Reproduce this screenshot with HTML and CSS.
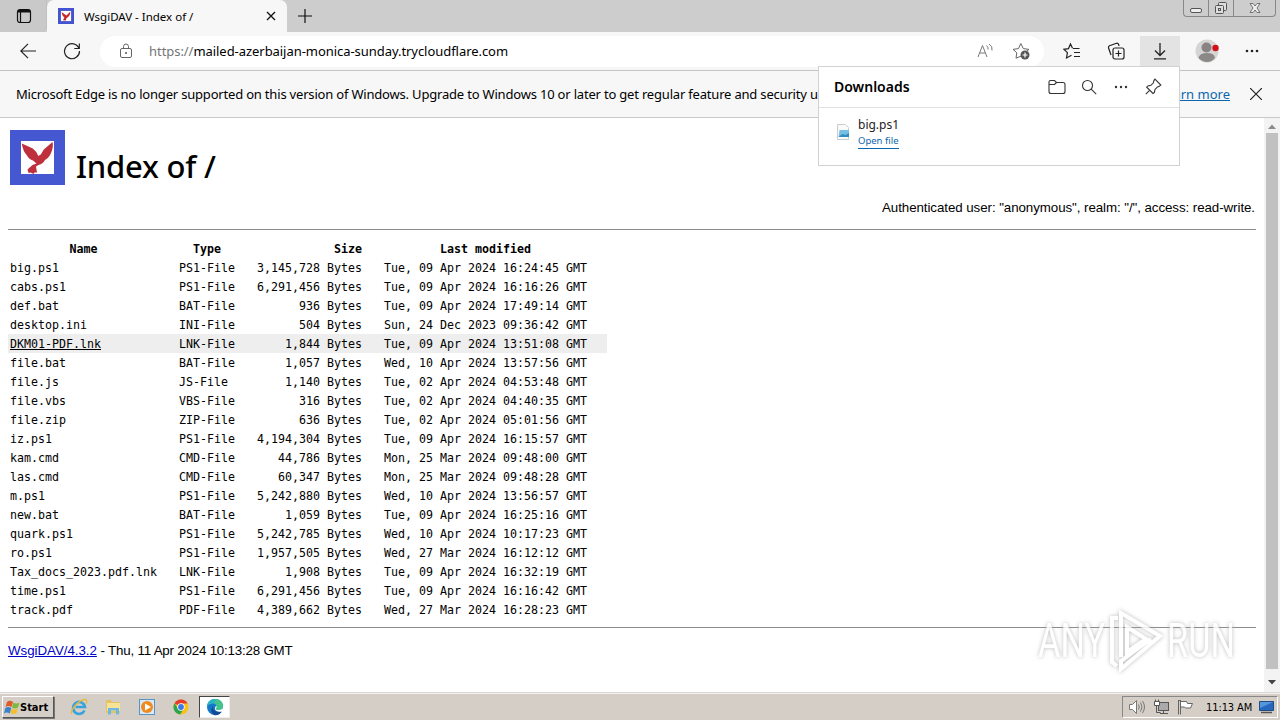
FILE: index.html
```html
<!DOCTYPE html>
<html lang="en">
<head>
  <meta charset="UTF-8" />
  <title>WsgiDAV - Index of /</title>
  <link rel="stylesheet" href="styles.css">
</head>
<body>
  <div class="tabbar">
    <div class="tab-actions">
      <svg width="16" height="16" viewBox="0 0 16 16" fill="none" stroke="#111" stroke-width="1.2"><rect x="1.5" y="1.5" width="13" height="13" rx="2.5"/><path d="M2 3.2h12" stroke-width="2.6"/><path d="M4.500 4v10"/></svg>
    </div>
    <div class="tab">
      <svg class="favicon" width="16" height="16" viewBox="0 0 55 55"><rect width="55" height="55" fill="#4454d0"/><rect x="10" y="10" width="35" height="35" fill="#fff"/><path d="M12 14l17 12 13-13c1 10-4 18-13 22l-2 8-10-1 5-9-6-6z" fill="#c62828"/></svg>
      <span class="tab-title">WsgiDAV - Index of /</span>
      <svg width="10" height="10" viewBox="0 0 10 10" stroke="#111" stroke-width="1.3"><path d="M1 1l8 8M9 1l-8 8"/></svg>
    </div>
    <div class="new-tab">
      <svg width="14" height="14" viewBox="0 0 14 14" stroke="#111" stroke-width="1.2"><path d="M7 0v14M0 7h14"/></svg>
    </div>
    <div class="window-buttons">
      <span class="wb wb-min"><svg width="14" height="16" viewBox="0 0 14 16" fill="#eee" stroke="#555"><rect x="1.5" y="8.5" width="11" height="4" rx="1.5"/></svg></span>
      <span class="wb wb-max"><svg width="14" height="16" viewBox="0 0 14 16" fill="#ddd" stroke="#555"><rect x="4.5" y="2.500" width="8" height="8" rx="1"/><rect x="1.500" y="5.500" width="8" height="8" rx="1"/><rect x="4.500" y="8.500" width="2" height="2"/></svg></span>
      <span class="wb wb-close"><svg width="12" height="16" viewBox="0 0 12 16" fill="#eee" stroke="#666" stroke-width=".9"><path d="M1 3.500h3l2 2.500 2-2.500h3L8 8l3 4.500H8L6 10l-2 2.500H1L4 8z"/></svg></span>
    </div>
  </div>

  <div class="toolbar">
    <svg class="back" width="16" height="16" viewBox="0 0 16 16" fill="none" stroke="#222" stroke-width="1.2"><path d="M16 8H.8M8 .8L.8 8 8 15.200"/></svg>
    <svg class="reload" width="18" height="18" viewBox="0 0 18 18" fill="none" stroke="#222" stroke-width="1.200"><path d="M16 6.500A7.500 7.500 0 1 0 16.500 9M16.300 1.500v5h-5"/></svg>
    <div class="address">
      <svg class="lock" width="14" height="16" viewBox="0 0 14 16" fill="none" stroke="#666"><rect x="1.500" y="5.500" width="11" height="9" rx="1.500"/><path d="M4.500 5.500V3.500a2.500 2.500 0 0 1 5 0v2"/><circle cx="7" cy="10" r=".7" fill="#666"/></svg>
      <span class="url"><span class="scheme">https://</span>mailed-azerbaijan-monica-sunday.trycloudflare.com</span>
      <svg class="read" width="17" height="16" viewBox="0 0 17 16" fill="none" stroke="#777"><path d="M1 14L5.500 2.500 10 14M3 10h5M9.500 2.500q2 1.500 1.500 4M12 1q4 2.500 3 6.500"/></svg>
      <svg class="fav" width="18" height="18" viewBox="0 0 18 18" fill="none" stroke="#666"><path d="M9 14.200l-5 2 .8-5.500L1 7.400l5.500-.8L8.800 1.500l2.500 5.100 5.700.8-3 2.500"/><circle cx="13" cy="13" r="4.500" fill="#555" stroke="none"/><path d="M13 10.500v5M10.500 13h5" stroke="#fff" stroke-width="1.200"/></svg>
    </div>
    <div class="tool"><svg width="18" height="18" viewBox="0 0 18 18" fill="none" stroke="#222" stroke-width="1.200"><path d="M10 6.500h6.500M11 10.500h6M11 14.500h6M9.500 6.200L7.500 2 5.500 6.600 1 7.300l3.400 3.400-.9 5.300 5-2.700"/></svg></div>
    <div class="tool"><svg width="18" height="18" viewBox="0 0 18 18" fill="none" stroke="#222" stroke-width="1.200"><rect x="6" y="6" width="11" height="11" rx="2"/><path d="M11.500 8.500v6M8.500 11.500h6M4 13L1.500 5.800q-.3-1.400 1-2L9.500 1.300q1.500-.4 2 1l.6 1.700"/></svg></div>
    <div class="tool active"><svg width="16" height="18" viewBox="0 0 16 18" fill="none" stroke="#222" stroke-width="1.300"><path d="M8 1v12M3 8.500L8 13.500l5-5M2 16.800h12"/></svg></div>
    <div class="tool profile"><svg width="24" height="24" viewBox="0 0 24 24"><circle cx="12" cy="12" r="11.500" fill="#d5d5d3"/><circle cx="11.500" cy="8.500" r="5" fill="#898383"/><path d="M3.500 19q1-5 8.500-5t8 5q-3.500 4-8 4t-8.500-4z" fill="#8b8987"/><circle cx="20.500" cy="9" r="3.200" fill="#d2101c"/></svg></div>
    <div class="tool"><svg width="14" height="4" viewBox="0 0 14 4" fill="#222"><circle cx="2" cy="2" r="1.300"/><circle cx="7" cy="2" r="1.300"/><circle cx="12" cy="2" r="1.300"/></svg></div>
  </div>

  <div class="notice">
    <span class="notice-text">Microsoft Edge is no longer supported on this version of Windows. Upgrade to Windows 10 or later to get regular feature and security u</span>
    <a class="learn" href="#">Learn more</a>
    <svg width="12" height="12" viewBox="0 0 12 12" stroke="#222" stroke-width="1.200"><path d="M0 0l12 12M12 0L0 12"/></svg>
  </div>

  <div class="view">
    <div class="page">
      <h1>
        <svg width="55" height="55" viewBox="0 0 55 55"><rect width="55" height="55" fill="#4558d2"/><rect x="11" y="11" width="33" height="33" fill="#fff"/><path d="M11.800 13.500l11 5q3.500 2.500 5.500 7.500l2.500-1.500 3-5 8.700-7.500q1.200 5-1.500 11-2 5-6 7-2 4-6.500 5l-2.500 1.500 1 6h-2.500l-1 1.500-3-1.500-2 .5-1-3.500 5-4.500 4-1.500-3.500-3q-4-1-6-5-4-4-5.200-12z" fill="#bd303c"/></svg>
        <span>Index of /</span>
      </h1>
      <div class="auth">Authenticated user: "anonymous", realm: "/", access: read-write.</div>
      <hr>
      <table>
        <colgroup><col class="c-name"><col class="c-type"><col class="c-size"><col class="c-date"></colgroup>
        <thead>
          <tr><th>Name</th><th>Type</th><th class="right">Size</th><th>Last modified</th></tr>
        </thead>
        <tbody>
          <tr><td>big.ps1</td><td>PS1-File</td><td class="right">3,145,728 Bytes</td><td>Tue, 09 Apr 2024 16:24:45 GMT</td></tr>
          <tr><td>cabs.ps1</td><td>PS1-File</td><td class="right">6,291,456 Bytes</td><td>Tue, 09 Apr 2024 16:16:26 GMT</td></tr>
          <tr><td>def.bat</td><td>BAT-File</td><td class="right">936 Bytes</td><td>Tue, 09 Apr 2024 17:49:14 GMT</td></tr>
          <tr><td>desktop.ini</td><td>INI-File</td><td class="right">504 Bytes</td><td>Sun, 24 Dec 2023 09:36:42 GMT</td></tr>
          <tr class="hover"><td><u>DKM01-PDF.lnk</u></td><td>LNK-File</td><td class="right">1,844 Bytes</td><td>Tue, 09 Apr 2024 13:51:08 GMT</td></tr>
          <tr><td>file.bat</td><td>BAT-File</td><td class="right">1,057 Bytes</td><td>Wed, 10 Apr 2024 13:57:56 GMT</td></tr>
          <tr><td>file.js</td><td>JS-File</td><td class="right">1,140 Bytes</td><td>Tue, 02 Apr 2024 04:53:48 GMT</td></tr>
          <tr><td>file.vbs</td><td>VBS-File</td><td class="right">316 Bytes</td><td>Tue, 02 Apr 2024 04:40:35 GMT</td></tr>
          <tr><td>file.zip</td><td>ZIP-File</td><td class="right">636 Bytes</td><td>Tue, 02 Apr 2024 05:01:56 GMT</td></tr>
          <tr><td>iz.ps1</td><td>PS1-File</td><td class="right">4,194,304 Bytes</td><td>Tue, 09 Apr 2024 16:15:57 GMT</td></tr>
          <tr><td>kam.cmd</td><td>CMD-File</td><td class="right">44,786 Bytes</td><td>Mon, 25 Mar 2024 09:48:00 GMT</td></tr>
          <tr><td>las.cmd</td><td>CMD-File</td><td class="right">60,347 Bytes</td><td>Mon, 25 Mar 2024 09:48:28 GMT</td></tr>
          <tr><td>m.ps1</td><td>PS1-File</td><td class="right">5,242,880 Bytes</td><td>Wed, 10 Apr 2024 13:56:57 GMT</td></tr>
          <tr><td>new.bat</td><td>BAT-File</td><td class="right">1,059 Bytes</td><td>Tue, 09 Apr 2024 16:25:16 GMT</td></tr>
          <tr><td>quark.ps1</td><td>PS1-File</td><td class="right">5,242,785 Bytes</td><td>Wed, 10 Apr 2024 10:17:23 GMT</td></tr>
          <tr><td>ro.ps1</td><td>PS1-File</td><td class="right">1,957,505 Bytes</td><td>Wed, 27 Mar 2024 16:12:12 GMT</td></tr>
          <tr><td>Tax_docs_2023.pdf.lnk</td><td>LNK-File</td><td class="right">1,908 Bytes</td><td>Tue, 09 Apr 2024 16:32:19 GMT</td></tr>
          <tr><td>time.ps1</td><td>PS1-File</td><td class="right">6,291,456 Bytes</td><td>Tue, 09 Apr 2024 16:16:42 GMT</td></tr>
          <tr><td>track.pdf</td><td>PDF-File</td><td class="right">4,389,662 Bytes</td><td>Wed, 27 Mar 2024 16:28:23 GMT</td></tr>
        </tbody>
      </table>
      <hr>
      <div class="footer"><a href="#">WsgiDAV/4.3.2</a> <span>- Thu, 11 Apr 2024 10:13:28 GMT</span></div>
    </div>
    <div class="scrollbar">
      <svg width="8" height="5" viewBox="0 0 8 5"><path d="M0 5l4-4.500L8 5z" fill="#8b8b8b"/></svg>
      <div class="thumb"></div>
      <svg width="8" height="5" viewBox="0 0 8 5"><path d="M0 0l4 4.500L8 0z" fill="#444"/></svg>
    </div>
  </div>

  <div class="taskbar">
    <div class="start">
      <svg width="16" height="15" viewBox="0 0 16 15"><path d="M3 2q3-2.500 6 0L7.500 7Q4.500 5 1.500 7z" fill="#e2592a"/><path d="M9.500 2.500q3 2 6 0l-1.500 5q-3 2-6 0z" fill="#7eb83c"/><path d="M1.300 8q3-2 6 0l-1.500 5.500q-3-2-5.800 0z" fill="#3c83ce"/><path d="M7.800 8.500q3 2 6 0L12.500 13q-3 2-6 0z" fill="#f4bd2c"/></svg>
      <b>Start</b>
    </div>
    <div class="launch"><svg width="18" height="18" viewBox="0 0 18 18" fill="none"><path d="M14.500 12.500A6 6 0 1 1 15 9H5.500" stroke="#36a3dc" stroke-width="2.600"/><path d="M2 16q-2-2 2-7Q10 1.500 15 1.500q3 .5 1 4.500" stroke="#e9b93c" stroke-width="1.300"/></svg></div>
    <div class="launch"><svg width="18" height="18" viewBox="0 0 18 18"><path d="M2 2h5l1 2h8v11H2z" fill="#e3c465"/><path d="M3 5h13v8H3z" fill="#f6e396"/><path d="M4 16.500v-6.500h11v6.500h-3v-4H7v4z" fill="#6fb7df"/></svg></div>
    <div class="launch"><svg width="18" height="18" viewBox="0 0 18 18"><rect x="1.500" y="1.500" width="15" height="15" fill="#d5e9f8" stroke="#5a94c4"/><circle cx="9" cy="9" r="6" fill="#f08a1d"/><path d="M7 5.500l6 3.500-6 3.500z" fill="#fff"/></svg></div>
    <div class="launch"><svg width="16" height="16" viewBox="0 0 16 16"><circle cx="8" cy="8" r="7.500" fill="#fbc116"/><path d="M8 8L1.500 4.200A7.500 7.500 0 0 1 14.600 4.500H8z" fill="#e33b2e"/><path d="M1.500 4.200A7.500 7.500 0 0 0 7.200 15.500L10.500 10 5 9.500z" fill="#2da44e"/><circle cx="8" cy="8" r="3.700" fill="#fff"/><circle cx="8" cy="8" r="2.900" fill="#3b78e7"/></svg></div>
    <div class="launch current"><svg width="18" height="18" viewBox="0 0 18 18"><circle cx="9" cy="9" r="8" fill="#1478c8"/><path d="M1 8Q2 1 9 1q7 0 8 7 0 4-4.500 4-3 0-2.500-1.500Q11.500 6 7 5.500 3 5.500 1 8z" fill="#2bb4c4"/><path d="M10 1q7 1 7 7 0 4-4.500 4-3 0-2.500-1.500Q12 6 8 5z" fill="#45c48a"/><path d="M7 8q-1 7 9 5.500-3 4.500-8 3.500-5-3-1-9z" fill="#124a94"/><path d="M10 10.500q-.5 1.500 2.500 1.500 2.500 0 4-1.500l1.500 1-2 2q-6 1-7-2.500 0-3 1.500-3 .5 1-.5 2.500z" fill="#fff"/></svg></div>
    <div class="tray">
      <svg width="18" height="16" viewBox="0 0 18 16" fill="none" stroke="#777"><path d="M1.500 5.500h3l4-4v13l-4-4h-3z" fill="#fff"/><path d="M10.500 5.500q1.500 2.500 0 5M12.500 3.500q3 4.500 0 9M14.500 2q4 6 0 12"/></svg>
      <svg width="17" height="16" viewBox="0 0 17 16" stroke="#555"><rect x="5.500" y="3.500" width="10" height="8" fill="#aaa"/><path d="M7 14.500h8M10.500 12v2M3.500 7v6.500h4" fill="none"/><path d="M1.500 2.500h5v4h-5zM2.500.5v2M5.500.5v2" fill="#fff"/></svg>
      <svg width="17" height="16" viewBox="0 0 17 16" fill="#fff" stroke="#666"><path d="M1.500 1v14.500M3.500 1v14.500M1.500 1.500h2M3.500 2.500h6l1 2h5l-2 4.500h-5l-1-1h-4"/></svg>
      <span class="clock">11:13 AM</span>
      <svg width="15" height="14" viewBox="0 0 15 14"><path d="M.5 1.500h14v9H.5z" fill="#2668bd" stroke="#204d86"/><path d="M1 2h13L1 8z" fill="#5595dc"/><path d="M2 12.500h11" stroke="#555" stroke-width="1.500"/></svg>
    </div>
  </div>

  <div class="downloads">
    <div class="downloads-head">
      <b>Downloads</b>
      <svg width="18" height="16" viewBox="0 0 18 16" fill="none" stroke="#333" stroke-width="1.100"><path d="M1 4V3q0-1.500 1.500-1.500h4L8.500 3.500h6.500q2 0 2 2V12.500q0 2-2 2H3q-2 0-2-2V4M1 5.500h5.500l2-2"/></svg>
      <svg width="16" height="16" viewBox="0 0 16 16" fill="none" stroke="#333" stroke-width="1.100"><circle cx="6.500" cy="6.500" r="5"/><path d="M10.200 10.200l5 5"/></svg>
      <svg width="14" height="4" viewBox="0 0 14 4" fill="#333"><circle cx="2" cy="2" r="1.200"/><circle cx="7" cy="2" r="1.200"/><circle cx="12" cy="2" r="1.200"/></svg>
      <svg width="17" height="17" viewBox="0 0 17 17" fill="none" stroke="#333" stroke-width="1.100"><path d="M10 1.200l5.800 5.800-1.500 1.300-1.800.6-2.500 2.500-.6 3L8 15.500 1.700 9.200l1.200-1.300 3-.6 2.500-2.500.5-2.200zM4.800 12.200L.8 16.200"/></svg>
    </div>
    <div class="downloads-item">
      <svg width="14" height="16" viewBox="0 0 14 16"><path d="M1.500.5h8l3 3v12h-11z" fill="#fafafa" stroke="#ccc"/><path d="M3.500 6H13v7H2.500z" fill="#76bfe4"/><path d="M2.500 13l4-3 3 1 3.500-2v4z" fill="#328bbd"/></svg>
      <div>
        <div class="file">big.ps1</div>
        <a class="open" href="#">Open file</a>
      </div>
    </div>
  </div>

  <div class="watermark">
    <span>ANY</span>
    <svg width="56" height="64" viewBox="0 0 56 64" fill="none" stroke="#fff" stroke-width="4"><path d="M13 48V4L52 27 13 60V52L43 30M10 9H4V53l5 4M19 43V18L38 30z"/></svg>
    <span>RUN</span>
  </div>
</body>
</html>
```
FILE: styles.css
```css
* {
  box-sizing: border-box;
}
body {
  margin: 0;
  width: 1280px;
  height: 720px;
  overflow: hidden;
  display: flex;
  flex-direction: column;
  position: relative;
  background: #fff;
  color: #000;
  font-family: "Noto Sans", sans-serif;
  font-size: 12px;
}
svg {
  display: block;
  flex: none;
}
.tabbar {
  height: 32px;
  flex: none;
  display: flex;
  background: #cdcdcd;
}
.tab-actions {
  width: 47px;
  padding: 8px 0 0 16px;
  background: #c9c9c9;
  border-right: 1px solid #c0c0c0;
  border-radius: 0 0 6px 0;
}
.tab {
  width: 240px;
  display: flex;
  align-items: center;
  padding: 0 11px;
  background: #f7f7f7;
  border-radius: 7px 7px 0 0;
}
.tab-title {
  flex: 1;
  margin-left: 10px;
  font-size: 11.5px;
  white-space: nowrap;
}
.new-tab {
  padding: 9px 0 0 11px;
  flex: 1;
}
.window-buttons {
  display: flex;
  width: 93px;
  height: 17px;
  margin-right: 4px;
  border: 1px solid #888;
  border-top: 0;
  border-radius: 0 0 4px 4px;
}
.wb {
  display: flex;
  justify-content: center;
  border-right: 1px solid #888;
}
.wb-min, .wb-max {
  width: 25px;
}
.wb-close {
  flex: 1;
  border: 0;
}
.toolbar {
  height: 39px;
  flex: none;
  display: flex;
  align-items: center;
  padding-left: 20px;
  background: #f7f7f7;
  border-bottom: 1px solid #c4c4c4;
}
.reload {
  margin-left: 27px;
}
.address {
  width: 944px;
  height: 31px;
  margin: 0 8px 0 19px;
  display: flex;
  align-items: center;
  padding: 0 14px 0 19px;
  background: #fff;
  border-radius: 16px;
}
.url {
  flex: 1;
  margin-left: 16px;
  font-size: 13px;
  letter-spacing: -0.05px;
  white-space: nowrap;
}
.scheme {
  color: #757575;
}
.fav {
  margin-left: 18px;
}
.tool {
  width: 40px;
  height: 31px;
  margin-right: 4px;
  display: flex;
  align-items: center;
  justify-content: center;
}
.tool.profile {
  margin: 0 4px 0 3px;
}
.tool:last-child {
  margin: 0 0 0 1px;
}
.tool.active {
  background: #e3e3e3;
}
.notice {
  height: 47px;
  flex: none;
  display: flex;
  align-items: center;
  padding: 0 18px 1px 16px;
  background: #f7f7f7;
  border-bottom: 1px solid #c8c8c8;
  font-size: 13px;
}
.notice-text {
  white-space: nowrap;
  letter-spacing: -0.19px;
}
.learn {
  color: #0c66ae;
  margin: 0 20px 0 auto;
}
.view {
  height: 575px;
  flex: none;
  display: flex;
  border-bottom: 1px solid #d6d6d6;
}
.page {
  flex: 1;
  padding: 12px 8px 0;
  font-family: "Liberation Sans", Arial, sans-serif;
  font-size: 13.33px;
}
h1 {
  height: 55px;
  margin: 0;
  display: flex;
  padding-left: 2px;
  font-family: "Noto Sans", sans-serif;
  font-size: 31px;
  font-weight: 500;
  letter-spacing: -0.2px;
}
h1 span {
  margin-left: 11px;
  line-height: 73px;
}
.auth {
  margin-top: 14px;
  height: 16px;
  line-height: 17px;
  padding-right: 1px;
  text-align: right;
  letter-spacing: -0.07px;
}
hr {
  height: 1px;
  margin: 14px 0 9px;
  border: 0;
  background: #8c8c8c;
}
table {
  width: 599px;
  table-layout: fixed;
  border-collapse: collapse;
  font-family: "DejaVu Sans Mono", monospace;
  font-size: 11.63px;
}
.c-name {
  width: 169px;
}
.c-type {
  width: 78px;
}
.c-size {
  width: 127px;
}
.c-date {
  width: 225px;
}
th, td {
  height: 19px;
  padding: 2px 20px 0 2px;
  line-height: 17px;
  white-space: nowrap;
}
.right {
  text-align: right;
}
.hover {
  background: #eee;
}
table + hr {
  margin: 8px 0 15px;
}
.footer {
  line-height: 16px;
}
.footer a {
  color: #0000c8;
  letter-spacing: -0.04px;
}
.footer span {
  letter-spacing: -0.2px;
}
.scrollbar {
  width: 16px;
  display: flex;
  flex-direction: column;
  align-items: center;
  justify-content: space-between;
  padding: 6px 0 7px;
  background: #f3f3f3;
}
.thumb {
  width: 12px;
  height: 536px;
  margin-bottom: 7px;
  background: #c1c1c1;
}
.taskbar {
  flex: 1;
  display: flex;
  padding: 2px 0 3px 2px;
  background: #d5cec6;
  border-top: 1px solid #f4f2ee;
}
.start {
  width: 52px;
  height: 22px;
  display: flex;
  align-items: center;
  padding-left: 1px;
  border: 1px solid;
  border-color: #fff #555 #555 #fff;
  box-shadow: 1px 1px 0 #777;
  font-family: "DejaVu Sans Condensed", "DejaVu Sans", sans-serif;
  font-size: 11px;
}
.launch {
  width: 34px;
  height: 22px;
  display: flex;
  align-items: center;
  justify-content: center;
}
.start + .launch {
  margin-left: 8px;
}
.current {
  width: 31px;
  margin-left: 1px;
  background: #fff;
  border: 1px solid;
  border-color: #444 #eee #eee #444;
}
.tray {
  width: 156px;
  height: 22px;
  margin: 0 2px 0 auto;
  display: flex;
  align-items: center;
  padding-left: 5px;
  gap: 7px;
  border: 1px solid;
  border-color: #888 #fff #fff #888;
}
.clock {
  margin-left: 5px;
  font-family: "DejaVu Sans Condensed", "DejaVu Sans", sans-serif;
  font-size: 11px;
  letter-spacing: -0.1px;
  white-space: nowrap;
}
/* flyout under the downloads button */
.downloads {
  position: absolute;
  left: 818px;
  top: 66px;
  width: 362px;
  height: 100px;
  background: #fff;
  border: 1px solid #d2d2d2;
}
.downloads-head {
  height: 41px;
  display: flex;
  align-items: center;
  padding: 0 17px 1px 15px;
  gap: 17px;
  border-bottom: 1px solid #e2e2e2;
}
.downloads-head b {
  flex: 1;
  font-size: 14px;
  font-weight: 600;
}
.downloads-head b + svg {
  margin-right: -2px;
}
.downloads-item {
  display: flex;
  padding: 8px 0 0 17px;
  gap: 8px;
}
.downloads-item svg {
  margin-top: 8px;
}
.file {
  color: #222;
  font-size: 12px;
  line-height: 17px;
}
.open {
  display: block;
  color: #0c66ae;
  font-size: 9.5px;
  line-height: 15px;
  text-decoration: none;
  border-bottom: 1px solid #0c66ae;
}
.watermark {
  position: absolute;
  left: 1038px;
  top: 608px;
  display: flex;
  align-items: center;
  color: #fff;
  font-family: "Roboto", sans-serif;
  font-size: 49px;
  line-height: 66px;
  opacity: .8;
  filter: drop-shadow(0 0 2px #aaa);
}
.watermark span {
  width: 70px;
  transform: scaleX(.7);
  transform-origin: 0 50%;
}
.watermark svg + span {
  margin-left: 3px;
}
```
